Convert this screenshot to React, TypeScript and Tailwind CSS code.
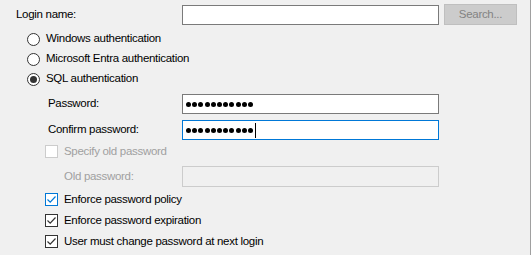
import React from "react"

const font = { fontFamily: '"Segoe UI", "Liberation Sans", Arial, sans-serif' }

const Radio = ({ checked, label }: { checked?: boolean; label: string }) => (
  <div className="flex items-center h-[20px] pl-[27px]">
    <span className="flex items-center justify-center w-[13px] h-[13px] rounded-full border border-[#333333] bg-white">
      {checked && <span className="w-[7px] h-[7px] rounded-full bg-[#333333]" />}
    </span>
    <span className="ml-[6px]">{label}</span>
  </div>
)

const Check = ({
  checked,
  focused,
  disabled,
  label,
}: {
  checked?: boolean
  focused?: boolean
  disabled?: boolean
  label: string
}) => {
  const border = disabled ? "border-[#cccccc]" : focused ? "border-[#0078d7]" : "border-[#333333]"
  const stroke = focused ? "#0078d7" : "#333333"
  return (
    <div className="flex items-center h-[21px] pl-[45px]">
      <span className={`flex items-center justify-center w-[13px] h-[13px] border bg-white ${border}`}>
        {checked && (
          <svg width="11" height="11" viewBox="0 0 11 11">
            <path d="M1.5 5.5 L4.2 8.2 L9.5 2.5" fill="none" stroke={stroke} strokeWidth="1.2" />
          </svg>
        )}
      </span>
      <span className={`ml-[6px] ${disabled ? "text-[#a0a0a0]" : ""}`}>{label}</span>
    </div>
  )
}

const Dots = ({ caret }: { caret?: boolean }) => (
  <div className="flex items-center pl-[3px] gap-[1.2px]">
    {Array.from({ length: 11 }).map((_, i) => (
      <span key={i} className="w-[5px] h-[5px] rounded-full bg-black" />
    ))}
    {caret && <span className="w-px h-[15px] bg-black ml-[1px]" />}
  </div>
)

export default function App() {
  return (
    <div
      style={font}
      className="w-[531px] h-[255px] bg-[#f0f0f0] border-r border-[#a0a0a0] text-[11.5px] tracking-[-0.3px] text-black leading-none overflow-hidden"
    >
      <div className="flex items-center h-[21px] mt-[4px]">
        <span className="w-[182px] pl-[16px]">Login name:</span>
        <div className="w-[257px] h-[20px] border border-[#7a7a7a] bg-white" />
        <div className="ml-[5px] w-[73px] h-[21px] border border-[#bfbfbf] bg-[#cccccc] text-[#838383] flex items-center justify-center">
          Search...
        </div>
      </div>

      <div className="mt-[4px]">
        <Radio label="Windows authentication" />
        <Radio label="Microsoft Entra authentication" />
        <Radio checked label="SQL authentication" />
      </div>

      <div className="flex items-center h-[20px] mt-[5px]">
        <span className="w-[182px] pl-[48px]">Password:</span>
        <div className="w-[257px] h-[20px] border border-[#7a7a7a] bg-white flex items-center">
          <Dots />
        </div>
      </div>
      <div className="flex items-center h-[20px] mt-[6px]">
        <span className="w-[182px] pl-[48px]">Confirm password:</span>
        <div className="w-[257px] h-[20px] border border-[#0078d7] bg-white flex items-center">
          <Dots caret />
        </div>
      </div>

      <div className="mt-[1px]">
        <Check disabled label="Specify old password" />
      </div>

      <div className="flex items-center h-[21px] mt-[4px]">
        <span className="w-[182px] pl-[64px] text-[#a0a0a0]">Old password:</span>
        <div className="w-[257px] h-[21px] border border-[#cccccc] bg-[#f0f0f0]" />
      </div>

      <div className="mt-[2px]">
        <Check checked focused label="Enforce password policy" />
        <Check checked label="Enforce password expiration" />
        <Check checked label="User must change password at next login" />
      </div>
    </div>
  )
}
